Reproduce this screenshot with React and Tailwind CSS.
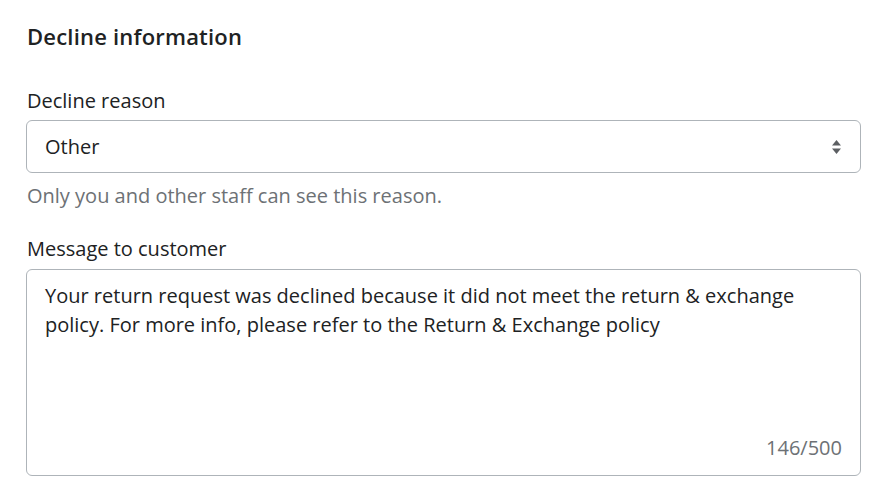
import React from "react";

export default function App() {
  return (
    <div className="min-h-screen bg-white font-['Open_Sans',sans-serif] text-[#202223]">
      <div className="px-[27px] pt-[22px] w-[860px] box-content">
        <h2 className="text-[22px] font-semibold leading-[28px] tracking-[0.2px]">Decline information</h2>

        <div className="mt-[38px]">
          <label className="block text-[20px] leading-[26px]">Decline reason</label>
          <div className="mt-[6px] -ml-px flex h-[53px] w-[835px] items-center justify-between rounded-[6px] border border-[#aeb4b9] pl-[18px] pr-[18px]">
            <span className="text-[20px]">Other</span>
            <svg width="11" height="16" viewBox="0 0 11 16" className="text-[#5c5f62]">
              <path d="M5.5 1 L10 6.5 H1 Z" fill="currentColor" />
              <path d="M5.5 15 L10 9.5 H1 Z" fill="currentColor" />
            </svg>
          </div>
          <p className="mt-[10px] text-[20px] leading-[26px] text-[#6d7175]">
            Only you and other staff can see this reason.
          </p>
        </div>

        <div className="mt-[27px]">
          <label className="block text-[20px] leading-[26px]">Message to customer</label>
          <div className="mt-[7px] -ml-px flex h-[207px] w-[835px] flex-col justify-between rounded-[6px] border border-[#aeb4b9] px-[18px] pt-[11px] pb-[14px]">
            <p className="text-[20px] leading-[29px]">
              Your return request was declined because it did not meet the return &amp; exchange policy. For more info, please refer to the Return &amp; Exchange policy
            </p>
            <div className="text-right text-[20px] leading-[26px] text-[#6d7175]">146/500</div>
          </div>
        </div>
      </div>
    </div>
  );
}
